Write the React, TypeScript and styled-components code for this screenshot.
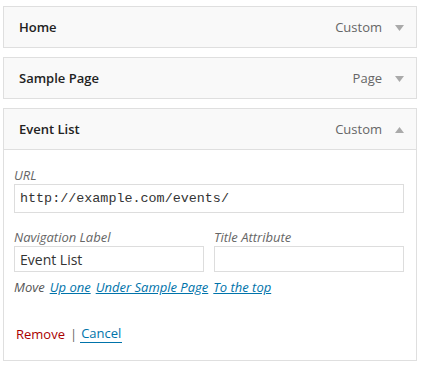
import styled, { createGlobalStyle } from "styled-components";

const GlobalStyle = createGlobalStyle`
  body {
    margin: 0;
    background: #ffffff;
    font-family: "Open Sans", "Noto Sans", sans-serif;
    color: #222;
  }
`;

type ItemType = {
  title: string;
  kind: string;
  open?: boolean;
};

const items: ItemType[] = [
  { title: "Home", kind: "Custom" },
  { title: "Sample Page", kind: "Page" },
  { title: "Event List", kind: "Custom", open: true },
];

const Arrow = ({ up }: { up?: boolean }) => (
  <svg width="9" height="6" viewBox="0 0 9 6">
    <path d={up ? "M0 6 L4.5 0 L9 6 Z" : "M0 0 L4.5 6 L9 0 Z"} fill="#aaa" />
  </svg>
);

const App = () => {
  return (
    <Wrapper>
      <GlobalStyle />
      {items.map((item) => (
        <Item key={item.title}>
          <Header open={item.open}>
            <Title>{item.title}</Title>
            <Controls>
              <Kind>{item.kind}</Kind>
              <Arrow up={item.open} />
            </Controls>
          </Header>
          {item.open && (
            <Settings>
              <Field>
                <Label>URL</Label>
                <Input tall defaultValue="http://example.com/events/" mono />
              </Field>
              <Row>
                <Field>
                  <Label>Navigation Label</Label>
                  <Input defaultValue="Event List" />
                </Field>
                <Field>
                  <Label>Title Attribute</Label>
                  <Input defaultValue="" />
                </Field>
              </Row>
              <MoveRow>
                <span>Move</span>
                <MoveLink href="#">Up one</MoveLink>
                <MoveLink href="#">Under Sample Page</MoveLink>
                <MoveLink href="#">To the top</MoveLink>
              </MoveRow>
              <Actions>
                <RemoveLink href="#">Remove</RemoveLink>
                <Sep>|</Sep>
                <CancelLink href="#">Cancel</CancelLink>
              </Actions>
            </Settings>
          )}
        </Item>
      ))}
    </Wrapper>
  );
};

const Wrapper = styled.div`
  padding: 6px 5px 0 3px;
  width: 414px;
  display: flex;
  flex-direction: column;
  gap: 9px;
`;

const Item = styled.div`
  border: 1px solid #dfdfdf;
  background: #fff;
`;

const Header = styled.div<{ open?: boolean }>`
  height: 40px;
  display: flex;
  align-items: center;
  justify-content: space-between;
  padding: 0 12px 0 15px;
  background: #f9f9f9;
  border-bottom: ${(p) => (p.open ? "1px solid #dfdfdf" : "none")};
`;

const Title = styled.div`
  font-size: 13px;
  font-weight: 600;
  color: #222;
`;

const Controls = styled.div`
  display: flex;
  align-items: center;
  gap: 13px;
  svg {
    margin-top: 1px;
  }
`;

const Kind = styled.span`
  font-size: 13px;
  color: #666;
`;

const Settings = styled.div`
  padding: 16px 12px 17px 10px;
`;

const Field = styled.div`
  display: flex;
  flex-direction: column;
  flex: 1;
`;

const Label = styled.label`
  font-size: 13px;
  font-style: italic;
  color: #666;
  line-height: 18px;
`;

const Input = styled.input<{ tall?: boolean; mono?: boolean }>`
  box-sizing: border-box;
  width: 100%;
  height: ${(p) => (p.tall ? "29px" : "26px")};
  border: 1px solid #ddd;
  padding: 0 5px;
  margin: 0;
  font-family: ${(p) =>
    p.mono ? '"Liberation Mono", "DejaVu Sans Mono", monospace' : '"Open Sans", sans-serif'};
  font-size: ${(p) => (p.mono ? "13.4px" : "14px")};
  color: #333;
  background: #fff;
  outline: none;
`;

const Row = styled.div`
  display: flex;
  gap: 10px;
  margin-top: 15px;
`;

const MoveRow = styled.div`
  display: flex;
  gap: 5px;
  margin-top: 6px;
  font-size: 13px;
  font-style: italic;
  color: #555;
  line-height: 18px;
`;

const MoveLink = styled.a`
  color: #0073aa;
  text-decoration: underline;
`;

const Actions = styled.div`
  display: flex;
  align-items: center;
  margin-top: 28px;
  padding-left: 2px;
  font-size: 13px;
  line-height: 18px;
`;

const RemoveLink = styled.a`
  color: #a00;
  text-decoration: none;
`;

const Sep = styled.span`
  color: #666;
  margin: 0 3px 0 5px;
`;

const CancelLink = styled.a`
  color: #0073aa;
  text-decoration: none;
  border-bottom: 1px solid #0073aa;
  padding: 0 1px;
`;

export default App;
